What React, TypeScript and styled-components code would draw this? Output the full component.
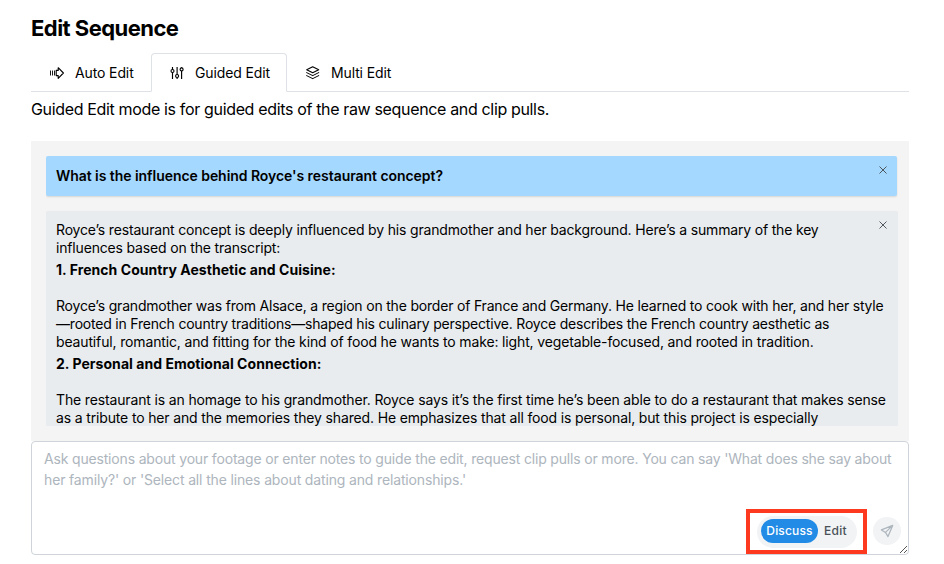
import React from "react";
import styled, { createGlobalStyle } from "styled-components";

const GlobalStyle = createGlobalStyle`
  * { box-sizing: border-box; }
  body { margin: 0; background: #fff; color: #000; font-family: Inter, "Liberation Sans", sans-serif; }
`;

const Page = styled.main`
  width: 944px;
  height: 564px;
  padding: 14px 35px 9px 31px;
  display: flex;
  flex-direction: column;
  overflow: hidden;
`;

const Title = styled.h1`
  margin: 0;
  height: 39px;
  font-size: 22px;
  line-height: 29px;
  font-weight: 700;
  letter-spacing: -0.54px;
`;

const TabList = styled.div`
  display: flex;
  height: 39px;
  flex: none;
  border-bottom: 1px solid #dee2e6;
`;

const Tab = styled.button<{ $active?: boolean; $width: number }>`
  display: flex;
  align-items: center;
  gap: 10.5px;
  width: ${(p) => p.$width}px;
  height: 39px;
  padding: 0 0 0 16.5px;
  font: 400 14px Inter, sans-serif;
  letter-spacing: -0.12px;
  white-space: nowrap;
  color: #000;
  background: ${(p) => (p.$active ? "#fff" : "transparent")};
  border: 1px solid ${(p) => (p.$active ? "#dee2e6" : "transparent")};
  border-bottom-color: ${(p) => (p.$active ? "#fff" : "transparent")};
  border-radius: 4px 4px 0 0;
  svg { width: 16px; height: 16px; flex: none; }
`;

const Description = styled.p`
  margin: 6px 0 20px;
  font-size: 16px;
  line-height: 23px;
  letter-spacing: -0.345px;
  white-space: nowrap;
`;

const Conversation = styled.section`
  flex: none;
  height: 300px;
  padding: 15px 11px 15px 15px;
  background: #f4f4f4;
`;

const Scroller = styled.div`
  height: 270px;
  overflow: hidden;
`;

const Message = styled.article<{ $question?: boolean }>`
  display: flex;
  justify-content: space-between;
  width: ${(p) => (p.$question ? 851 : 852)}px;
  height: ${(p) => (p.$question ? "40px" : "auto")};
  min-height: ${(p) => (p.$question ? 0 : 260)}px;
  margin-bottom: 15px;
  padding: 10px ${(p) => (p.$question ? 8 : 9)}px 10px 10px;
  border-radius: 2px;
  background: ${(p) => (p.$question ? "#a5d8ff" : "#e9ecef")};
  box-shadow: 0 1px 2px rgba(0, 0, 0, 0.13);
`;

const Line = styled.span<{ $track?: number }>`
  display: block;
  white-space: nowrap;
  letter-spacing: ${(p) => p.$track ?? 0}px;
`;

const Copy = styled.div`
  width: 0;
  font-size: 14px;
  line-height: 18px;
`;

const Heading = styled.strong`
  display: block;
  padding-top: 4px;
  margin-bottom: 18px;
  font-weight: 700;
`;

const Question = styled.strong`
  font-size: 14px;
  line-height: 20px;
  font-weight: 600;
  letter-spacing: -0.05px;
`;

const Close = styled.button`
  display: flex;
  width: 12px;
  height: 12px;
  margin-top: -2px;
  padding: 0;
  border: 0;
  background: none;
  svg { width: 12px; height: 12px; }
`;

const Composer = styled.section`
  flex: none;
  position: relative;
  display: flex;
  flex-direction: column;
  justify-content: space-between;
  height: 114px;
  padding: 6px 0 0 12px;
  background: #fff;
  border: 1px solid #ced4da;
  border-radius: 4px;
`;

const Placeholder = styled.div`
  font-size: 14px;
  line-height: 21px;
  color: #adb5bd;
`;

const Actions = styled.div`
  display: flex;
  align-self: flex-end;
  align-items: center;
  gap: 6px;
  padding-right: 7px;
`;

const Highlight = styled.div`
  display: flex;
  align-items: center;
  justify-content: center;
  width: 121px;
  height: 45px;
  border: 4px solid #fd3a20;
`;

const Segments = styled.div`
  display: flex;
  align-items: center;
  width: 100px;
  height: 32px;
  padding: 4px;
  border-radius: 16px;
  background: #f1f3f5;
`;

const Segment = styled.button<{ $active?: boolean }>`
  width: ${(p) => (p.$active ? 57 : 35)}px;
  height: 24px;
  margin-top: -1px;
  padding: 0 0 0 1px;
  border: 0;
  border-radius: 12px;
  font: 450 12px/24px Inter, sans-serif;
  letter-spacing: ${(p) => (p.$active ? 0.15 : 0.3)}px;
  color: ${(p) => (p.$active ? "#fff" : "#495057")};
  background: ${(p) => (p.$active ? "#228be6" : "transparent")};
`;

const SendButton = styled.button`
  display: flex;
  align-items: center;
  justify-content: center;
  width: 28px;
  height: 28px;
  margin-top: -1px;
  padding: 0;
  border: 0;
  border-radius: 50%;
  color: #adb5bd;
  background: #f1f3f5;
`;

const Grip = styled.svg`
  position: absolute;
  right: 0;
  bottom: 0;
`;

const CloseIcon = () => (
  <svg viewBox="0 0 12 12" fill="none" stroke="#495057" strokeWidth="0.95">
    <path d="M2.5 2.5l7 7M9.5 2.5l-7 7" />
  </svg>
);

const AutoIcon = () => (
  <svg viewBox="0 0 16 16" fill="none" stroke="#000" strokeLinejoin="round">
    <path d="M1.5 5.5v5M3.5 5.5v5M5.5 5.5v5" strokeWidth="0.9" />
    <path d="M7.2 5.4h2V2.7L14.4 8l-5.2 5.3v-2.7h-2z" strokeWidth="1.1" />
  </svg>
);

const SlidersIcon = () => (
  <svg viewBox="0 0 16 16" fill="none" stroke="#000" strokeWidth="1.15">
    <path d="M3.5 2v2.4M3.5 7.6V14M8.1 2v7.4M8.1 12.6V14M12.6 2v.8M12.6 6V14" />
    <circle cx="3.5" cy="6" r="1.5" />
    <circle cx="8.1" cy="11" r="1.5" />
    <circle cx="12.6" cy="4.4" r="1.5" />
  </svg>
);

const LayersIcon = () => (
  <svg viewBox="0 0 16 16" fill="none" stroke="#000" strokeWidth="1.05" strokeLinejoin="round" strokeLinecap="round">
    <path d="M7.7 1.7l6 3-6 3-6-3zM1.7 7.6l6 3 6-3M1.7 10.6l6 3 6-3" />
  </svg>
);

const SendIcon = () => (
  <svg width="14" height="14" viewBox="0 0 14 14" fill="none" stroke="currentColor" strokeWidth="1.2" strokeLinejoin="round">
    <path d="M12.7 1.4L1.4 5.9l4.1 2.5 2.5 4.2zM12.7 1.4L5.5 8.4" />
  </svg>
);

export default function App() {
  return (
    <>
      <GlobalStyle />
      <Page>
        <Title>Edit Sequence</Title>
        <TabList>
          <Tab $width={120}><AutoIcon />Auto Edit</Tab>
          <Tab $width={136} $active><SlidersIcon />Guided Edit</Tab>
          <Tab $width={122}><LayersIcon />Multi Edit</Tab>
        </TabList>
        <Description>Guided Edit mode is for guided edits of the raw sequence and clip pulls.</Description>
        <Conversation>
          <Scroller>
            <Message $question>
              <Question>What is the influence behind Royce's restaurant concept?</Question>
              <Close aria-label="Close"><CloseIcon /></Close>
            </Message>
            <Message>
              <Copy>
                <Line $track={-0.175}>Royce’s restaurant concept is deeply influenced by his grandmother and her background. Here’s a summary of the key</Line>
                <Line $track={-0.17}>influences based on the transcript:</Line>
                <Heading><Line $track={0.05}>1. French Country Aesthetic and Cuisine:</Line></Heading>
                <Line $track={-0.195}>Royce’s grandmother was from Alsace, a region on the border of France and Germany. He learned to cook with her, and her style</Line>
                <Line $track={-0.205}>—rooted in French country traditions—shaped his culinary perspective. Royce describes the French country aesthetic as</Line>
                <Line $track={-0.147}>beautiful, romantic, and fitting for the kind of food he wants to make: light, vegetable-focused, and rooted in tradition.</Line>
                <Heading><Line $track={0.04}>2. Personal and Emotional Connection:</Line></Heading>
                <Line $track={-0.145}>The restaurant is an homage to his grandmother. Royce says it’s the first time he’s been able to do a restaurant that makes sense</Line>
                <Line $track={-0.15}>as a tribute to her and the memories they shared. He emphasizes that all food is personal, but this project is especially</Line>
              </Copy>
              <Close aria-label="Close"><CloseIcon /></Close>
            </Message>
          </Scroller>
        </Conversation>
        <Composer>
          <Placeholder>
            <Line $track={-0.172}>Ask questions about your footage or enter notes to guide the edit, request clip pulls or more. You can say 'What does she say about</Line>
            <Line $track={-0.15}>her family?' or 'Select all the lines about dating and relationships.'</Line>
          </Placeholder>
          <Actions>
            <Highlight>
              <Segments>
                <Segment $active>Discuss</Segment>
                <Segment>Edit</Segment>
              </Segments>
            </Highlight>
            <SendButton aria-label="Send"><SendIcon /></SendButton>
          </Actions>
          <Grip width="9" height="9" viewBox="0 0 9 9" stroke="#555" strokeWidth="1"><path d="M1 8L8 1M5 8L8 5" /></Grip>
        </Composer>
      </Page>
    </>
  );
}
